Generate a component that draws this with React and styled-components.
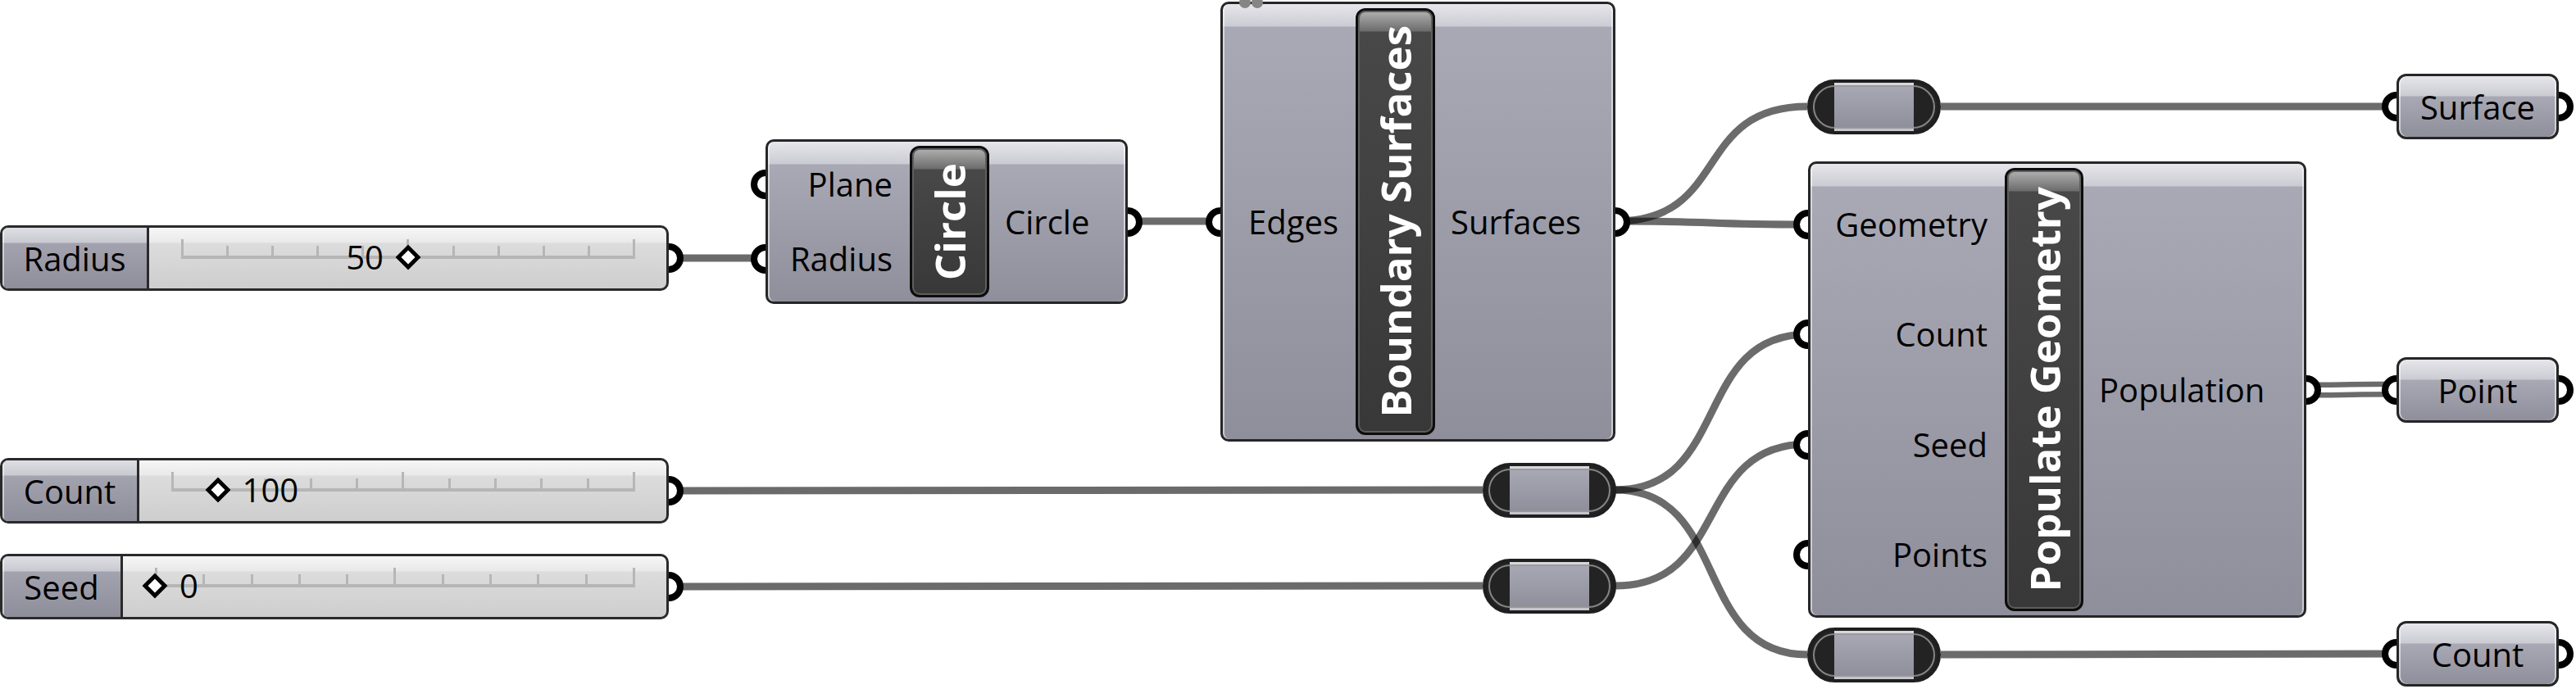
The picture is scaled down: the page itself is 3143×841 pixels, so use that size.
import React from "react";
import styled, { createGlobalStyle } from "styled-components";

const GlobalStyle = createGlobalStyle`
  html, body {
    margin: 0;
    padding: 0;
    background: #ffffff;
  }
  body {
    font-family: "Open Sans", "Noto Sans", Arial, sans-serif;
    color: #000;
  }
`;

const WIRE = "rgba(0, 0, 0, 0.58)";

const components = [
    {
        id: "circle",
        x: 934,
        y: 170,
        w: 442,
        h: 201,
        title: "Circle",
        inputs: ["Plane", "Radius"],
        outputs: ["Circle"],
        inW: 173,
        titleW: 97,
        outW: 166,
    },
    {
        id: "boundary",
        x: 1489,
        y: 2,
        w: 482,
        h: 537,
        title: "Boundary Surfaces",
        inputs: ["Edges"],
        outputs: ["Surfaces"],
        inW: 162,
        titleW: 97,
        outW: 217,
        dots: true,
    },
    {
        id: "populate",
        x: 2206,
        y: 197,
        w: 608,
        h: 557,
        title: "Populate Geometry",
        inputs: ["Geometry", "Count", "Seed", "Points"],
        outputs: ["Population"],
        inW: 237,
        titleW: 96,
        outW: 269,
    },
];

const sliders = [
    { name: "Radius", y: 275, nameW: 182, value: 50, min: 0, max: 100, side: "left" },
    { name: "Count", y: 559, nameW: 170, value: 100, min: 0, max: 1000, side: "right" },
    { name: "Seed", y: 676, nameW: 150, value: 0, min: 0, max: 100, side: "right" },
];

const relays = [
    { x: 2205, y: 97 },
    { x: 1809, y: 565 },
    { x: 1809, y: 682 },
    { x: 2205, y: 766 },
];

const params = [
    { name: "Surface", y: 90 },
    { name: "Point", y: 436 },
    { name: "Count", y: 758 },
];

const wires = [
    [816, 315, 934, 315],
    [1376, 270, 1489, 270],
    [1971, 270, 2205, 130],
    [1971, 270, 2206, 274],
    [2368, 130, 2924, 130],
    [816, 599, 1809, 598],
    [816, 716, 1809, 715],
    [1971, 598, 2206, 408],
    [1971, 598, 2205, 799],
    [1971, 715, 2206, 542],
    [2368, 799, 2924, 798],
];

const portY = (h, n, i) => 10 + ((h - 20) / n) * (i + 0.5);

const curve = (x1, y1, x2, y2) => {
    const d = (x2 - x1) * 0.6;
    return `M${x1} ${y1} C${x1 + d} ${y1} ${x2 - d} ${y2} ${x2} ${y2}`;
};

export default function App() {
    return (
        <>
            <GlobalStyle />
            <Canvas>
                <Wires width="3143" height="841" viewBox="0 0 3143 841">
                    {wires.map((w, i) => (
                        <path key={i} d={curve(...w)} fill="none" stroke={WIRE} strokeWidth="9" />
                    ))}
                    <path d={curve(2814, 476, 2924, 475)} fill="none" stroke="#6b6b6b" strokeWidth="19" />
                    <path d={curve(2814, 476, 2924, 475)} fill="none" stroke="#ffffff" strokeWidth="6" />
                </Wires>

                {sliders.map(s => (
                    <NumberSlider key={s.name} {...s} />
                ))}

                {components.map(c => (
                    <Component key={c.id} c={c} />
                ))}

                {relays.map((r, i) => (
                    <Node key={i} $x={r.x} $y={r.y} $w={163} $h={67}>
                        <Relay />
                    </Node>
                ))}

                {params.map(p => (
                    <Node key={p.name + p.y} $x={2924} $y={p.y} $w={198} $h={80}>
                        <Port $side="left" $y={40} />
                        <Port $side="right" $y={40} />
                        <ParamBody>{p.name}</ParamBody>
                    </Node>
                ))}
            </Canvas>
        </>
    );
}

function Component({ c }) {
    return (
        <Node $x={c.x} $y={c.y} $w={c.w} $h={c.h}>
            {c.inputs.map((label, i) => (
                <Port key={label} $side="left" $y={portY(c.h, c.inputs.length, i)} />
            ))}
            {c.outputs.map((label, i) => (
                <Port key={label} $side="right" $y={portY(c.h, c.outputs.length, i)} />
            ))}
            <Body>
                <PortColumn $w={c.inW} $align="end">
                    {c.inputs.map(label => (
                        <PortLabel key={label}>{label}</PortLabel>
                    ))}
                </PortColumn>
                <TitleBar $w={c.titleW}>
                    <TitleText>{c.title}</TitleText>
                </TitleBar>
                <PortColumn $w={c.outW} $align="start">
                    {c.outputs.map(label => (
                        <PortLabel key={label}>{label}</PortLabel>
                    ))}
                </PortColumn>
            </Body>
            {c.dots ? (
                <Dots>
                    <Dot />
                    <Dot />
                </Dots>
            ) : null}
        </Node>
    );
}

function NumberSlider({ name, y, nameW, value, min, max, side }) {
    const pos = (value - min) / (max - min);
    const ticks = Array.from({ length: 11 }, (_, i) => i);

    return (
        <Node $x={0} $y={y} $w={816} $h={80}>
            <Port $side="right" $y={40} />
            <SliderBody>
                <SliderName $w={nameW - 3}>{name}</SliderName>
                <Rail>
                    <TickRow>
                        {ticks.map(t => (
                            <Tick key={t} $tall={t % 5 === 0} />
                        ))}
                    </TickRow>
                    <Knob $pos={pos} />
                    <Value $pos={pos} $side={side}>
                        {value}
                    </Value>
                </Rail>
            </SliderBody>
        </Node>
    );
}

const Canvas = styled.div`
    position: relative;
    width: 3143px;
    height: 841px;
    overflow: hidden;
    background: #ffffff;
`;

const Wires = styled.svg`
    position: absolute;
    left: 0;
    top: 0;
    pointer-events: none;
`;

const Node = styled.div`
    position: absolute;
    left: ${p => p.$x}px;
    top: ${p => p.$y}px;
    width: ${p => p.$w}px;
    height: ${p => p.$h}px;
`;

const Port = styled.span`
    position: absolute;
    top: ${p => p.$y - 18}px;
    ${p => (p.$side === "left" ? "left: -18px;" : "right: -18px;")}
    width: 36px;
    height: 36px;
    box-sizing: border-box;
    border: 8px solid #000;
    border-radius: 50%;
    background: #ffffff;
`;

const Body = styled.div`
    position: relative;
    box-sizing: border-box;
    width: 100%;
    height: 100%;
    display: flex;
    border: 3px solid #262626;
    border-radius: 10px;
    background: linear-gradient(
        to bottom,
        #e6e6eb 0px,
        #cbcbd3 27px,
        #a9a9b5 28px,
        #8f8e9b 100%
    );
    box-shadow: inset 2px 0 0 rgba(255, 255, 255, 0.55),
        inset -2px 0 0 rgba(255, 255, 255, 0.55);
`;

const PortColumn = styled.div`
    box-sizing: border-box;
    width: ${p => p.$w}px;
    display: flex;
    flex-direction: column;
    align-items: ${p => (p.$align === "end" ? "flex-end" : "flex-start")};
    padding: ${p => (p.$align === "end" ? "7px 21px 7px 0" : "7px 0 7px 19px")};
`;

const PortLabel = styled.div`
    flex: 1;
    display: flex;
    align-items: center;
    font-size: 40px;
    line-height: 1;
    white-space: nowrap;
`;

const TitleBar = styled.div`
    box-sizing: border-box;
    width: ${p => p.$w}px;
    margin: 5px 0;
    display: flex;
    align-items: center;
    justify-content: center;
    border: 3px solid #0d0d0d;
    border-radius: 12px;
    background: linear-gradient(
        to bottom,
        #b2b2b2 0px,
        #6c6c6c 25px,
        #484848 26px,
        #383838 100%
    );
    box-shadow: inset 0 0 0 2px #5e5e5e;
`;

const TitleText = styled.span`
    writing-mode: vertical-rl;
    transform: rotate(180deg);
    color: #ffffff;
    font-weight: 700;
    font-size: 51px;
    line-height: 1.1;
    white-space: nowrap;
`;

const Dots = styled.div`
    position: absolute;
    left: 23px;
    top: -6px;
    display: flex;
    gap: 1px;
`;

const Dot = styled.span`
    width: 14px;
    height: 14px;
    border-radius: 50%;
    background: #858585;
`;

const SliderBody = styled.div`
    position: relative;
    box-sizing: border-box;
    height: 100%;
    display: flex;
    overflow: hidden;
    border: 3px solid #2a2a2a;
    border-radius: 10px;
    background: linear-gradient(
        to bottom,
        #f6f6f6 0px,
        #e9e9e9 18px,
        #dcdcdc 19px,
        #cecece 100%
    );
`;

const SliderName = styled.div`
    box-sizing: border-box;
    width: ${p => p.$w}px;
    display: flex;
    align-items: center;
    justify-content: center;
    border-right: 3px solid #2a2a2a;
    font-size: 40px;
    background: linear-gradient(
        to bottom,
        #dedee4 0px,
        #c9c9d1 18px,
        #a3a3af 19px,
        #8e8e9a 100%
    );
    box-shadow: inset 2px 0 0 rgba(255, 255, 255, 0.5);
`;

const Rail = styled.div`
    position: relative;
    flex: 1;
    margin: 0 38px 0 39px;
    padding-top: 14px;
`;

const TickRow = styled.div`
    display: flex;
    justify-content: space-between;
    align-items: flex-end;
    height: 20px;
    border-bottom: 4px solid #b6b6b6;
`;

const Tick = styled.span`
    width: 3px;
    height: ${p => (p.$tall ? 20 : 12)}px;
    background: #b6b6b6;
`;

const Knob = styled.span`
    position: absolute;
    left: ${p => p.$pos * 100}%;
    top: 36px;
    width: 22px;
    height: 22px;
    box-sizing: border-box;
    border: 5px solid #000;
    background: #ffffff;
    transform: translate(-50%, -50%) rotate(45deg);
`;

const Value = styled.span`
    position: absolute;
    top: 36px;
    ${p =>
        p.$side === "left"
            ? `right: calc(${(1 - p.$pos) * 100}% + 30px);`
            : `left: calc(${p.$pos * 100}% + 30px);`}
    transform: translateY(-50%);
    font-size: 40px;
    line-height: 1;
    white-space: nowrap;
`;

const Relay = styled.div`
    position: relative;
    box-sizing: border-box;
    width: 100%;
    height: 100%;
    border: 4px solid #1f1f1f;
    border-radius: 40px;
    background: linear-gradient(
            to right,
            #232323 0px,
            #232323 29px,
            transparent 29px,
            transparent calc(100% - 29px),
            #232323 calc(100% - 29px)
        ),
        linear-gradient(
            to bottom,
            #d6d6dc 0px,
            #d6d6dc 3px,
            #a8a8b4 4px,
            #8f8e9b calc(100% - 4px),
            #c4c4cc calc(100% - 3px)
        );
    &::after {
        content: "";
        position: absolute;
        inset: 3px;
        border: 2px solid rgba(150, 150, 150, 0.85);
        border-radius: 40px;
    }
`;

const ParamBody = styled.div`
    position: relative;
    box-sizing: border-box;
    width: 100%;
    height: 100%;
    display: flex;
    align-items: center;
    justify-content: center;
    font-size: 40px;
    border: 3px solid #262626;
    border-radius: 12px;
    background: linear-gradient(
        to bottom,
        #e6e6eb 0px,
        #cbcbd3 24px,
        #a9a9b5 25px,
        #8f8e9b 100%
    );
    box-shadow: inset 2px 0 0 rgba(255, 255, 255, 0.55),
        inset -2px 0 0 rgba(255, 255, 255, 0.55);
`;
